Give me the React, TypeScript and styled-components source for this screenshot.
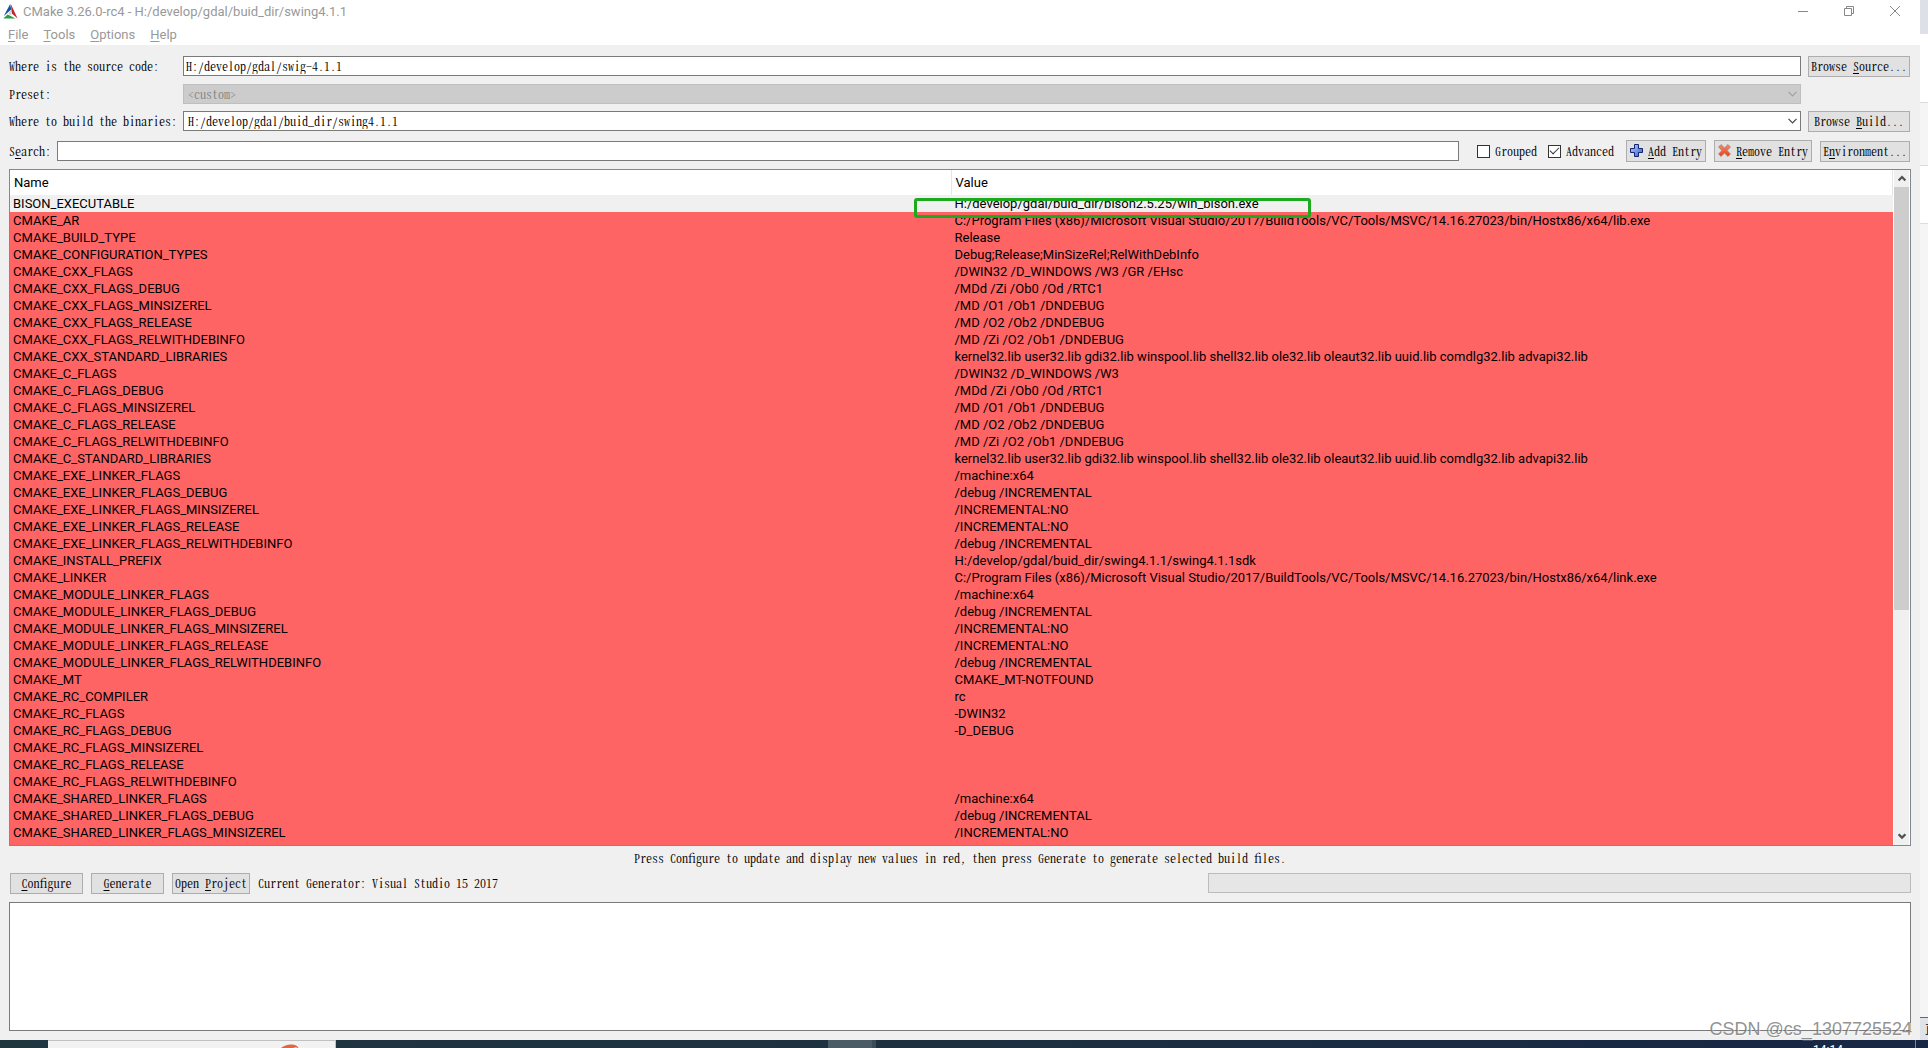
import React from "react";
import styled, { createGlobalStyle } from "styled-components";

const ui = `Roboto, "Noto Sans", sans-serif`;
const song = `"Noto Serif CJK SC", "Noto Sans Mono CJK SC", "Liberation Mono", monospace`;

const GlobalStyle = createGlobalStyle`
  * { box-sizing: border-box; }
  body { margin: 0; background: #f0f0f0; }
  button, input, select, textarea { font: inherit; font-feature-settings: inherit; color: inherit; margin: 0; padding: 0; border-radius: 0; }
  u { text-underline-offset: 2px; }
`;

const Screen = styled.div`
  position: relative;
  display: flex;
  flex-direction: column;
  height: 100vh;
  min-height: 480px;
  overflow: hidden;
`;
const Desktop = styled.div`
  flex: 1;
  min-height: 0;
  display: flex;
`;
const Window = styled.div`
  flex: 1;
  min-width: 0;
  display: flex;
  flex-direction: column;
  background: #f0f0f0;
  font: 12px/16px ${song};
  font-feature-settings: "hwid";
  color: #000;
`;
const TitleBar = styled.header`
  display: flex;
  align-items: center;
  height: 23px;
  padding: 0 2px 0 3px;
  gap: 5px;
  background: #fff;
  color: #999;
  font: 13px/16px ${ui};
  font-feature-settings: normal;
`;
const Title = styled.span`
  flex: 1;
`;
const WindowButton = styled.button`
  width: 46px;
  height: 21px;
  margin-bottom: 2px;
  border: 0;
  background: none;
  display: flex;
  align-items: center;
  justify-content: center;
`;
const WindowButtons = styled.div`
  display: flex;
`;
const MenuBar = styled.nav`
  display: flex;
  align-items: center;
  height: 22px;
  padding: 2px 8px 0;
  gap: 15px;
  background: #fff;
  color: #999;
  font: 13px/16px ${ui};
  font-feature-settings: normal;
`;
const MenuItem = styled.button`
  border: 0;
  background: none;
`;
const Content = styled.main`
  flex: 1;
  min-height: 0;
  display: flex;
  flex-direction: column;
  padding: 11px 9px 9px;
`;
const PathGrid = styled.div`
  display: grid;
  grid-template-columns: 167px 1fr 102px;
  grid-template-rows: 21px 20px 21px;
  gap: 7px;
  align-items: start;
  margin-right: 1px;
`;
const FieldLabel = styled.label`
  line-height: 20px;
  white-space: pre;
`;
const TextField = styled.input`
  width: 100%;
  height: 20px;
  padding: 0 2px 2px;
  border: 1px solid #7a7a7a;
  background: #fff;
  outline: none;
`;
const ComboBox = styled.div`
  display: grid;
  align-items: center;
  > * { grid-area: 1 / 1; }
  > svg { justify-self: end; margin-right: 4px; pointer-events: none; }
`;
const Select = styled.select`
  appearance: none;
  width: 100%;
  height: 20px;
  padding: 0 4px;
  border: 1px solid #7a7a7a;
  background: #fff;
  outline: none;
  &:disabled { background: #ccc; border-color: #bfbfbf; color: #838383; opacity: 1; }
`;
const Button = styled.button<{ $w?: number; $tall?: boolean }>`
  display: flex;
  align-items: center;
  justify-content: center;
  gap: 5px;
  width: ${(p) => (p.$w ? `${p.$w}px` : "100%")};
  height: ${(p) => (p.$tall ? 22 : 21)}px;
  padding-bottom: 1px;
  border: 1px solid #adadad;
  background: #e1e1e1;
  white-space: pre;
`;
const SearchRow = styled.div`
  display: flex;
  align-items: center;
  gap: 8px;
  margin: 8px 1px 7px 0;
`;
const SearchBox = styled.div`
  flex: 1;
  display: flex;
  align-items: center;
  gap: 6px;
`;
const Checks = styled.div`
  display: flex;
  gap: 11px;
  margin: 0 4px 0 10px;
`;
const CheckLabel = styled.label`
  display: flex;
  align-items: center;
  gap: 5px;
`;
const CheckBox = styled.input`
  appearance: none;
  width: 13px;
  height: 13px;
  border: 1px solid #333;
  background: #fff;
  display: grid;
  place-items: center;
  &:checked::before {
    content: "";
    width: 8px;
    height: 4px;
    margin-bottom: 3px;
    border: solid #333;
    border-width: 0 0 1px 1px;
    rotate: -45deg;
  }
`;
const CacheView = styled.div`
  flex: 1;
  min-height: 0;
  display: flex;
  border: 1px solid #828790;
  background: #fff;
`;
const CacheScroll = styled.div`
  flex: 1;
  overflow: hidden;
  background: #ff6464;
`;
const CacheTable = styled.table`
  width: 100%;
  table-layout: fixed;
  border-collapse: separate;
  border-spacing: 0;
  font: 13px/17px ${ui};
  font-feature-settings: normal;
`;
const HeadCell = styled.th`
  height: 25px;
  padding: 0 4px;
  text-align: left;
  font-weight: 400;
  background: #fff;
  border-right: 1px solid #e5e5e5;
`;
const Row = styled.tr<{ $known?: boolean }>`
  background: ${(p) => (p.$known ? "#f0f0f0" : "#ff6464")};
`;
const Cell = styled.td`
  position: relative;
  height: 17px;
  padding: 0 3px;
  white-space: pre;
`;
const Highlight = styled.span`
  position: absolute;
  z-index: 1;
  left: -38px;
  top: 3px;
  width: 397px;
  height: 20px;
  border: 3px solid #1eaa1e;
  border-radius: 3px;
`;
const ScrollBar = styled.div`
  width: 16px;
  display: flex;
  flex-direction: column;
  margin-left: 1px;
  background: #f0f0f0;
  border-right: 1px solid #fff;
`;
const ScrollButton = styled.button`
  height: 17px;
  border: 0;
  background: #f0f0f0;
  display: flex;
  align-items: center;
  justify-content: center;
`;
const ScrollTrack = styled.div`
  flex: 1;
`;
const ScrollThumb = styled.div`
  height: 66%;
  background: #cdcdcd;
`;
const Hint = styled.p`
  margin: 0 0 3px;
  text-align: center;
  line-height: 24px;
`;
const Actions = styled.div`
  display: flex;
  align-items: flex-start;
  gap: 8px;
  padding-left: 1px;
`;
const Generator = styled.span`
  flex: 1;
  line-height: 20px;
`;
const Progress = styled.progress`
  appearance: none;
  width: 37%;
  height: 20px;
  border: 1px solid #bcbcbc;
  background: #e6e6e6;
  &::-webkit-progress-bar { background: #e6e6e6; }
`;
const Output = styled.textarea`
  height: 129px;
  margin-top: 8px;
  border: 1px solid #7a7a7a;
  background: #fff;
  resize: none;
  outline: none;
`;
const Behind = styled.aside`
  width: 8px;
  display: flex;
  flex-direction: column;
  overflow: hidden;
`;
const Band = styled.div<{ $h?: number; $bg: string; $line?: string }>`
  ${(p) => (p.$h ? `height: ${p.$h}px` : "flex: 1")};
  background: ${(p) => p.$bg};
  border-bottom: ${(p) => (p.$line ? `1px solid ${p.$line}` : "0")};
`;
const BehindText = styled.div`
  height: 22px;
  padding-left: 5px;
  background: #dfe3e8;
  font: 12px/22px "Noto Sans CJK SC", sans-serif;
  white-space: nowrap;
`;
const TaskBar = styled.footer`
  display: flex;
  height: 8px;
  overflow: hidden;
  background: linear-gradient(90deg, #1f363f, #1d3040 50%, #182844 90%);
  color: #fff;
  font: 12px/14px ${ui};
`;
const TaskSearch = styled.div`
  width: 288px;
  margin-left: 48px;
  padding: 3px 34px 0 0;
  border: solid #c0c0c0;
  border-width: 1px 1px 0 0;
  background: #f2f2f2;
  display: flex;
  justify-content: flex-end;
`;
const TaskApp = styled.div`
  width: 48px;
  margin: 0 auto 0 492px;
  background: #4b5b66;
  border-right: 4px solid #3b4b57;
`;
const Clock = styled.time`
  padding: 3px 72px 0 0;
`;
const ShowDesktop = styled.div`
  width: 13px;
  border-left: 1px solid #7c8795;
`;
const Watermark = styled.div`
  position: absolute;
  right: 16px;
  bottom: 8px;
  font: 18px/22px "Liberation Sans", Arial, sans-serif;
  color: rgba(110, 110, 110, 0.75);
  text-shadow: 1px 1px 0 rgba(255, 255, 255, 0.6);
  pointer-events: none;
`;

const stdLibs =
  "kernel32.lib user32.lib gdi32.lib winspool.lib shell32.lib ole32.lib oleaut32.lib uuid.lib comdlg32.lib advapi32.lib";
const msvc = "C:/Program Files (x86)/Microsoft Visual Studio/2017/BuildTools/VC/Tools/MSVC/14.16.27023/bin/Hostx86/x64/";
const entries: [string, string][] = [
  ["BISON_EXECUTABLE", "H:/develop/gdal/buid_dir/bison2.5.25/win_bison.exe"],
  ["CMAKE_AR", msvc + "lib.exe"],
  ["CMAKE_BUILD_TYPE", "Release"],
  ["CMAKE_CONFIGURATION_TYPES", "Debug;Release;MinSizeRel;RelWithDebInfo"],
  ["CMAKE_CXX_FLAGS", "/DWIN32 /D_WINDOWS /W3 /GR /EHsc"],
  ["CMAKE_CXX_FLAGS_DEBUG", "/MDd /Zi /Ob0 /Od /RTC1"],
  ["CMAKE_CXX_FLAGS_MINSIZEREL", "/MD /O1 /Ob1 /DNDEBUG"],
  ["CMAKE_CXX_FLAGS_RELEASE", "/MD /O2 /Ob2 /DNDEBUG"],
  ["CMAKE_CXX_FLAGS_RELWITHDEBINFO", "/MD /Zi /O2 /Ob1 /DNDEBUG"],
  ["CMAKE_CXX_STANDARD_LIBRARIES", stdLibs],
  ["CMAKE_C_FLAGS", "/DWIN32 /D_WINDOWS /W3"],
  ["CMAKE_C_FLAGS_DEBUG", "/MDd /Zi /Ob0 /Od /RTC1"],
  ["CMAKE_C_FLAGS_MINSIZEREL", "/MD /O1 /Ob1 /DNDEBUG"],
  ["CMAKE_C_FLAGS_RELEASE", "/MD /O2 /Ob2 /DNDEBUG"],
  ["CMAKE_C_FLAGS_RELWITHDEBINFO", "/MD /Zi /O2 /Ob1 /DNDEBUG"],
  ["CMAKE_C_STANDARD_LIBRARIES", stdLibs],
  ["CMAKE_EXE_LINKER_FLAGS", "/machine:x64"],
  ["CMAKE_EXE_LINKER_FLAGS_DEBUG", "/debug /INCREMENTAL"],
  ["CMAKE_EXE_LINKER_FLAGS_MINSIZEREL", "/INCREMENTAL:NO"],
  ["CMAKE_EXE_LINKER_FLAGS_RELEASE", "/INCREMENTAL:NO"],
  ["CMAKE_EXE_LINKER_FLAGS_RELWITHDEBINFO", "/debug /INCREMENTAL"],
  ["CMAKE_INSTALL_PREFIX", "H:/develop/gdal/buid_dir/swing4.1.1/swing4.1.1sdk"],
  ["CMAKE_LINKER", msvc + "link.exe"],
  ["CMAKE_MODULE_LINKER_FLAGS", "/machine:x64"],
  ["CMAKE_MODULE_LINKER_FLAGS_DEBUG", "/debug /INCREMENTAL"],
  ["CMAKE_MODULE_LINKER_FLAGS_MINSIZEREL", "/INCREMENTAL:NO"],
  ["CMAKE_MODULE_LINKER_FLAGS_RELEASE", "/INCREMENTAL:NO"],
  ["CMAKE_MODULE_LINKER_FLAGS_RELWITHDEBINFO", "/debug /INCREMENTAL"],
  ["CMAKE_MT", "CMAKE_MT-NOTFOUND"],
  ["CMAKE_RC_COMPILER", "rc"],
  ["CMAKE_RC_FLAGS", "-DWIN32"],
  ["CMAKE_RC_FLAGS_DEBUG", "-D_DEBUG"],
  ["CMAKE_RC_FLAGS_MINSIZEREL", ""],
  ["CMAKE_RC_FLAGS_RELEASE", ""],
  ["CMAKE_RC_FLAGS_RELWITHDEBINFO", ""],
  ["CMAKE_SHARED_LINKER_FLAGS", "/machine:x64"],
  ["CMAKE_SHARED_LINKER_FLAGS_DEBUG", "/debug /INCREMENTAL"],
  ["CMAKE_SHARED_LINKER_FLAGS_MINSIZEREL", "/INCREMENTAL:NO"],
];

/* Label whose mnemonic letter, at index `at`, is underlined. */
function Mnemonic({ text, at = 0 }: { text: string; at?: number }) {
  return (
    <span>
      {text.slice(0, at)}
      <u>{text[at]}</u>
      {text.slice(at + 1)}
    </span>
  );
}

function Chevron({ color }: { color: string }) {
  return (
    <svg width="9" height="6" viewBox="0 0 9 6" fill="none" stroke={color} strokeWidth="1.2">
      <path d="M.5 .8 4.5 4.8 8.5 .8" />
    </svg>
  );
}

function ScrollArrow({ down }: { down?: boolean }) {
  return (
    <svg width="8" height="7" viewBox="0 0 8 7" fill="none" stroke="#505050" strokeWidth="2.2">
      <path d={down ? "M.6 1.2 4 4.6 7.4 1.2" : "M.6 5.4 4 2 7.4 5.4"} />
    </svg>
  );
}

export default function App() {
  return (
    <Screen>
      <GlobalStyle />
      <Desktop>
        <Window>
          <TitleBar>
            <svg width="15" height="15" viewBox="0 0 15 15">
              <path d="M7.2 0 .8 12 8.2 5.6Z" fill="#15529a" />
              <path d="M7.8 0 8.8 9.6 14.6 14.4Z" fill="#c8202f" />
              <path d="M.3 14.6 4.6 10.4 12.6 14.6Z" fill="#2a9c46" />
              <path d="M7.9 6.2 5.2 9.8 8.4 11.8Z" fill="#ccd2d8" />
            </svg>
            <Title>CMake 3.26.0-rc4 - H:/develop/gdal/buid_dir/swing4.1.1</Title>
            <WindowButtons>
              <WindowButton aria-label="Minimize">
                <svg width="10" height="10" stroke="#888"><path d="M0 5.5H10" /></svg>
              </WindowButton>
              <WindowButton aria-label="Restore">
                <svg width="10" height="10" fill="none" stroke="#888"><path d="M.5 2.5H7.5V9.5H.5ZM2.5 2.5V.5H9.5V7.5H7.5" /></svg>
              </WindowButton>
              <WindowButton aria-label="Close">
                <svg width="10" height="10" stroke="#888"><path d="M0 0 10 10M10 0 0 10" /></svg>
              </WindowButton>
            </WindowButtons>
          </TitleBar>
          <MenuBar>
            {["File", "Tools", "Options", "Help"].map((m) => (
              <MenuItem key={m}><Mnemonic text={m} /></MenuItem>
            ))}
          </MenuBar>
          <Content>
            <PathGrid>
              <FieldLabel htmlFor="source">Where is the source code:</FieldLabel>
              <TextField id="source" defaultValue="H:/develop/gdal/swig-4.1.1" />
              <Button><Mnemonic text="Browse Source..." at={7} /></Button>

              <FieldLabel htmlFor="preset">Preset:</FieldLabel>
              <ComboBox>
                <Select id="preset" disabled><option>&lt;custom&gt;</option></Select>
                <Chevron color="#a0a0a0" />
              </ComboBox>
              <span />

              <FieldLabel htmlFor="build">Where to build the binaries:</FieldLabel>
              <ComboBox>
                <Select id="build"><option>H:/develop/gdal/buid_dir/swing4.1.1</option></Select>
                <Chevron color="#444" />
              </ComboBox>
              <Button><Mnemonic text="Browse Build..." at={7} /></Button>
            </PathGrid>

            <SearchRow>
              <SearchBox>
                <FieldLabel htmlFor="search"><Mnemonic text="Search:" at={1} /></FieldLabel>
                <TextField id="search" />
              </SearchBox>
              <Checks>
                <CheckLabel><CheckBox type="checkbox" />Grouped</CheckLabel>
                <CheckLabel><CheckBox type="checkbox" defaultChecked />Advanced</CheckLabel>
              </Checks>
              <Button $w={80} $tall>
                <svg width="13" height="13" viewBox="0 0 13 13">
                  <defs>
                    <linearGradient id="plus" x2="1" y2="1"><stop stopColor="#b9d0ff" /><stop offset="1" stopColor="#2f5fd0" /></linearGradient>
                  </defs>
                  <path d="M4.5 .5h4v4h4v4h-4v4h-4v-4h-4v-4h4Z" fill="url(#plus)" stroke="#14246e" />
                </svg>
                <Mnemonic text="Add Entry" />
              </Button>
              <Button $w={98} $tall>
                <svg width="13" height="13" viewBox="0 0 13 13">
                  <defs>
                    <linearGradient id="cross" x2="0" y2="1"><stop stopColor="#f58a6c" /><stop offset="1" stopColor="#f03c14" /></linearGradient>
                  </defs>
                  <path d="M3 .6 6.5 3.9 10 .6 12.4 3 9.1 6.5 12.4 10 10 12.4 6.5 9.1 3 12.4 .6 10 3.9 6.5 .6 3Z" fill="url(#cross)" stroke="#a08468" strokeWidth=".8" />
                </svg>
                <Mnemonic text="Remove Entry" />
              </Button>
              <Button $w={90}><Mnemonic text="Environment..." at={1} /></Button>
            </SearchRow>

            <CacheView>
              <CacheScroll>
                <CacheTable>
                  <thead>
                    <tr><HeadCell>Name</HeadCell><HeadCell>Value</HeadCell></tr>
                  </thead>
                  <tbody>
                    {entries.map(([name, value], i) => (
                      <Row key={name} $known={i === 0}>
                        <Cell>{name}</Cell>
                        <Cell>{value}{i === 0 && <Highlight />}</Cell>
                      </Row>
                    ))}
                  </tbody>
                </CacheTable>
              </CacheScroll>
              <ScrollBar>
                <ScrollButton aria-label="Scroll up"><ScrollArrow /></ScrollButton>
                <ScrollTrack><ScrollThumb /></ScrollTrack>
                <ScrollButton aria-label="Scroll down"><ScrollArrow down /></ScrollButton>
              </ScrollBar>
            </CacheView>

            <Hint>Press Configure to update and display new values in red, then press Generate to generate selected build files.</Hint>
            <Actions>
              <Button $w={73}><Mnemonic text="Configure" /></Button>
              <Button $w={73}><Mnemonic text="Generate" /></Button>
              <Button $w={78}><Mnemonic text="Open Project" at={5} /></Button>
              <Generator>Current Generator: Visual Studio 15 2017</Generator>
              <Progress value={0} max={100} aria-label="Progress" />
            </Actions>
            <Output aria-label="Output" readOnly />
          </Content>
        </Window>
        <Behind>
          <Band $h={34} $bg="#dde1e7" />
          <Band $h={69} $bg="#fff" $line="#dcdcdc" />
          <Band $h={63} $bg="#f5f5f5" $line="#dcdcdc" />
          <Band $h={58} $bg="#fff" $line="#dcdcdc" />
          <Band $bg="#f5f5f5" $line="#666" />
          <BehindText>直</BehindText>
        </Behind>
      </Desktop>
      <TaskBar>
        <TaskSearch>
          <svg width="22" height="8" viewBox="0 0 22 8">
            <path d="M0 6C4 1 12-1 18 2L21 6 14 4Z" fill="#e2673a" />
            <path d="M11 5 17 3 21 6 20 8H12Z" fill="#d8d8d8" />
          </svg>
        </TaskSearch>
        <TaskApp />
        <Clock>14:14</Clock>
        <ShowDesktop />
      </TaskBar>
      <Watermark>CSDN @cs_1307725524</Watermark>
    </Screen>
  );
}
